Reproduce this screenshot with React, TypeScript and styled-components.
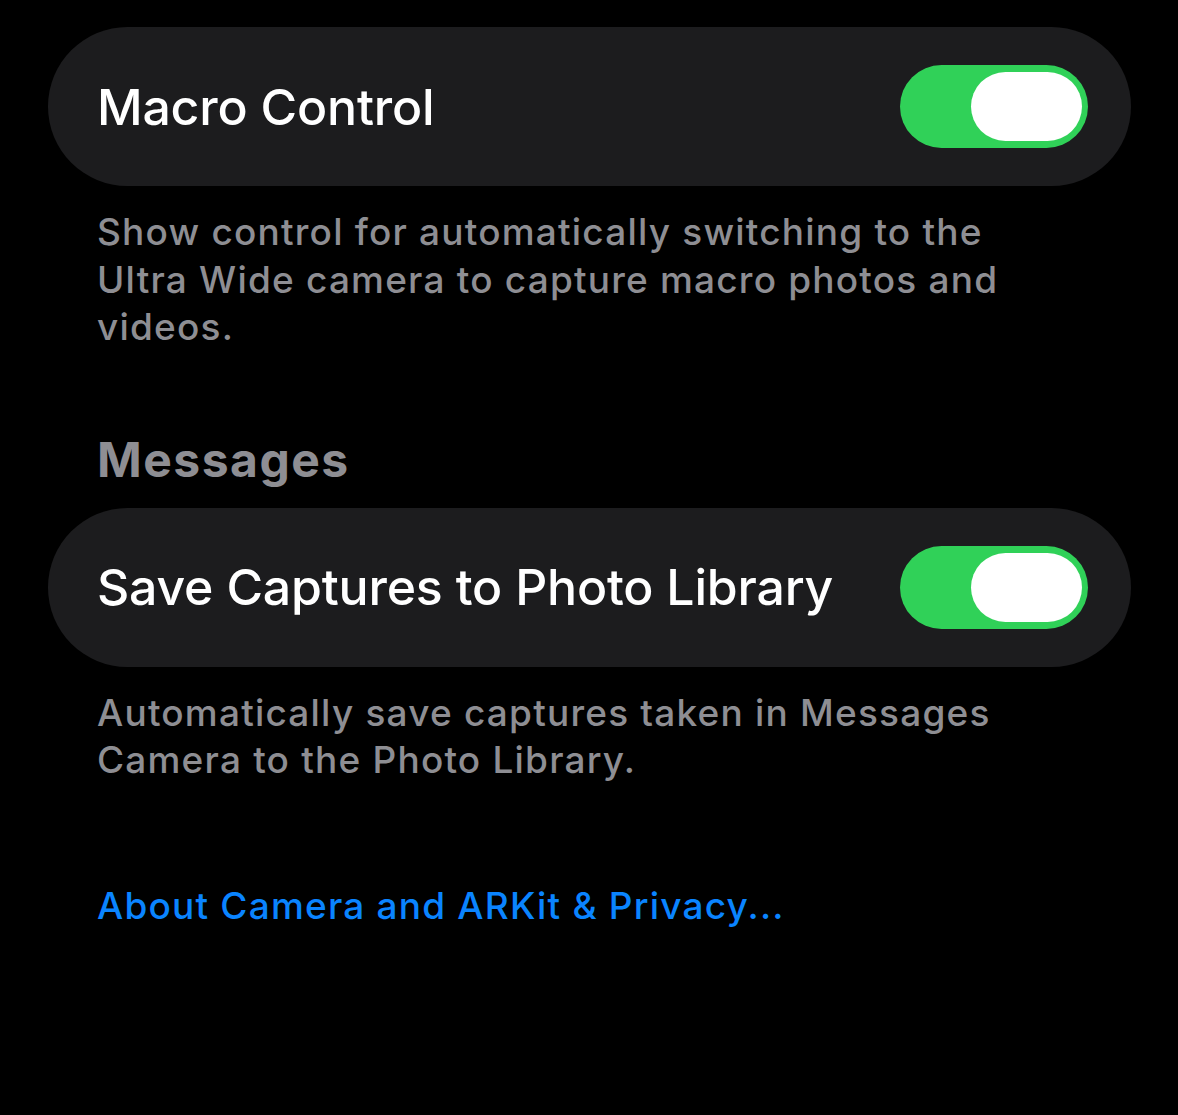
import styled, { createGlobalStyle } from 'styled-components'

const GlobalStyle = createGlobalStyle`
  html, body {
    margin: 0;
    padding: 0;
    background: #000;
  }
  body {
    font-family: Inter, "Noto Sans", "Liberation Sans", sans-serif;
    -webkit-font-smoothing: antialiased;
  }
`

interface ToggleProps {
  on: boolean
}

const Toggle = ({ on }: ToggleProps) => (
  <Track $on={on}>
    <Knob />
  </Track>
)

interface RowProps {
  title: string
  on?: boolean
}

const SettingRow = ({ title, on = true }: RowProps) => (
  <Card>
    <RowTitle>{title}</RowTitle>
    <Toggle on={on} />
  </Card>
)

const App = () => {
  return (
    <>
      <GlobalStyle />
      <Page>
        <SettingRow title='Macro Control' />
        <Footer>
          Show control for automatically switching to the Ultra Wide camera to capture macro
          photos and videos.
        </Footer>

        <SectionHeader>Messages</SectionHeader>
        <SettingRow title='Save Captures to Photo Library' />
        <Footer>
          Automatically save captures taken in Messages Camera to the Photo Library.
        </Footer>

        <PrivacyLink href='#'>About Camera and ARKit &amp; Privacy...</PrivacyLink>
      </Page>
    </>
  )
}

export default App

const Page = styled.div`
  width: 1178px;
  height: 1115px;
  box-sizing: border-box;
  padding: 27px 47px 0 48px;
  display: flex;
  flex-direction: column;
  background: #000;
`

const Card = styled.div`
  height: 159px;
  box-sizing: border-box;
  display: flex;
  align-items: center;
  justify-content: space-between;
  padding: 0 43px 0 49px;
  background: #1c1c1e;
  border-radius: 80px;
`

const RowTitle = styled.span`
  color: #fff;
  font-size: 50px;
  font-weight: 500;
  letter-spacing: -0.2px;
`

const Track = styled.div<{ $on: boolean }>`
  width: 188px;
  height: 83px;
  box-sizing: border-box;
  padding: 7px 6px;
  border-radius: 42px;
  background: ${({ $on }) => ($on ? '#30d158' : '#39393d')};
  display: flex;
  justify-content: ${({ $on }) => ($on ? 'flex-end' : 'flex-start')};
`

const Knob = styled.div`
  width: 111px;
  height: 69px;
  border-radius: 35px;
  background: #fff;
`

const Footer = styled.p`
  margin: 22px 0 0 49px;
  width: 960px;
  color: #8e8e93;
  font-size: 37px;
  font-weight: 500;
  line-height: 47.5px;
  letter-spacing: 1.2px;
`

const SectionHeader = styled.h2`
  margin: 80px 0 19px 49px;
  color: #8e8e93;
  font-size: 48px;
  font-weight: 700;
  line-height: 58px;
  letter-spacing: 1.5px;
`

const PrivacyLink = styled.a`
  margin: 98px 0 0 49px;
  color: #0a84ff;
  font-size: 37px;
  font-weight: 500;
  line-height: 48px;
  letter-spacing: 1.2px;
  text-decoration: none;
`
